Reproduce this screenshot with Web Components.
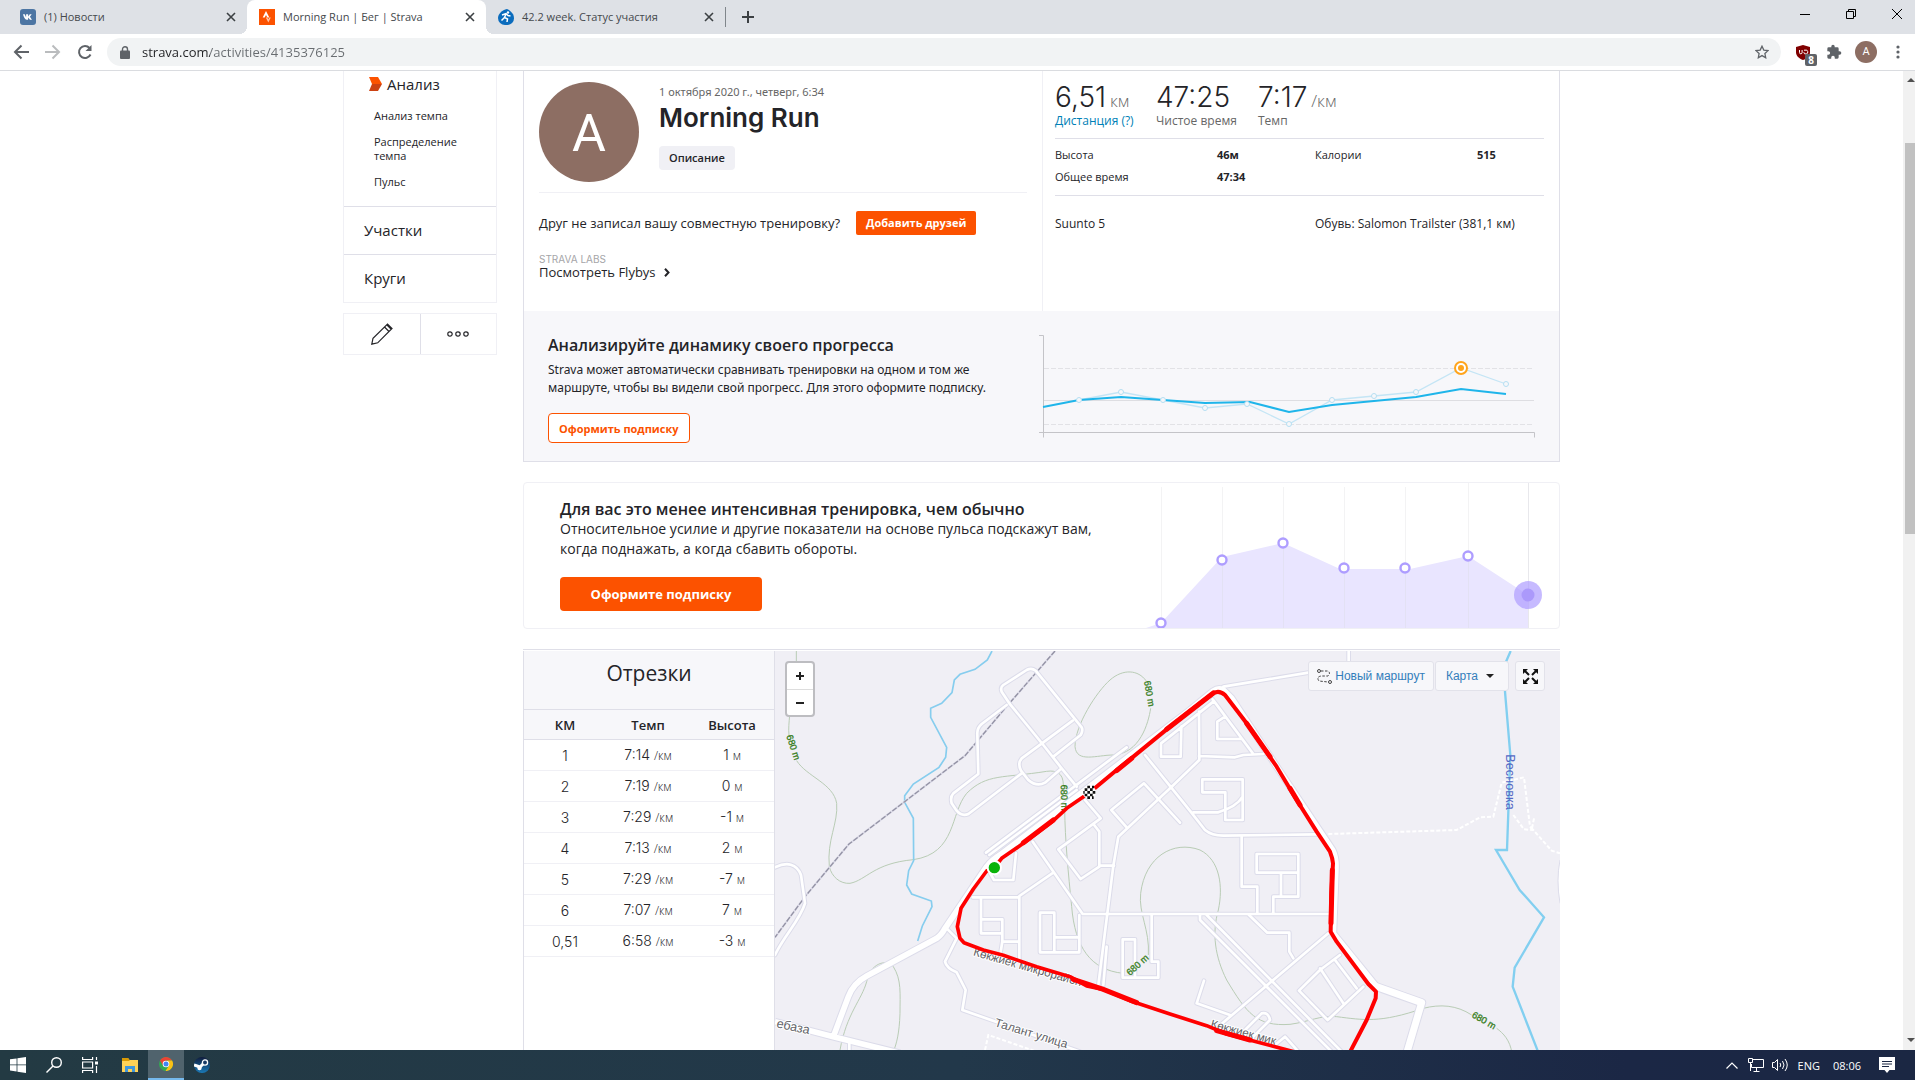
<!DOCTYPE html>
<html lang="ru">
<head>
<meta charset="utf-8">
<title>Morning Run | Бег | Strava</title>
<style>
html,body{margin:0;height:100%}
body{display:flex;flex-direction:column;overflow:hidden;background:#fff;color:#242428;font-family:"Open Sans","Noto Sans",sans-serif;font-size:12px}
browser-bar,task-bar{flex:none}
page-view{flex:1;min-height:0}
</style>
</head>
<body>
<browser-bar>
  <browser-tab close-label="Закрыть"><svg slot="icon" width="16" height="16" viewBox="0 0 16 16"><rect width="16" height="16" rx="3" fill="#4c75a3"/><path d="M3 5.200h1.700l1.400 3V5.200h2v2.200l1.700-2.200h1.900L9.900 7.700l2.100 3h-2L8.100 8.500v2.200H6.700C5 10.400 3.700 8 3 5.200z" fill="#fff"/></svg>(1) Новости</browser-tab>
  <browser-tab active close-label="Закрыть"><svg slot="icon" width="16" height="16" viewBox="0 0 16 16"><rect width="16" height="16" fill="#fc5200"/><path d="M7 2l3.300 6.500H8.300L7 6 5.700 8.500H3.700z" fill="#fff"/><path d="M8.300 8.500L9.300 10.500 10.300 8.500h1.500L9.300 13.500 6.800 8.500z" fill="#ffc5a8"/></svg>Morning Run | Бег | Strava</browser-tab>
  <browser-tab close-label="Закрыть"><svg slot="icon" width="16" height="16" viewBox="0 0 16 16"><path d="M9 0c4 2 7 5 7 9.500A6.500 6.500 0 0 1 9.500 16H7A7 7 0 0 1 0 9C0 5 4 1 9 0z" fill="#0b6cbd"/><path d="M4 6l4-1.500 2 2 2.500.5M8 5L6.500 8.500 9.500 10 9 13M6.500 8.500L3.500 11.500" fill="none" stroke="#fff" stroke-width="1.500"/><circle cx="10" cy="3.500" r="1.200" fill="#fff"/></svg>42.2 week. Статус участия</browser-tab>
</browser-bar>
<page-view>
  <activity-sidebar></activity-sidebar>
  <main-column>
    <activity-summary></activity-summary>
    <effort-promo></effort-promo>
    <splits-map>
      <splits-table slot="table"></splits-table>
      <route-map slot="map"></route-map>
    </splits-map>
  </main-column>
</page-view>
<task-bar></task-bar>

<script>
const base = `<style>
*,:host{box-sizing:border-box}
button{font:inherit;color:inherit;background:none;border:0;padding:0;margin:0;cursor:pointer}
a{color:inherit;text-decoration:none}
h1,h2,p,ul,dl,dd,dt{margin:0;padding:0;font-weight:inherit}
ul{list-style:none}
svg{display:block;flex:none}
</style>`;
function define(name, html) {
  const t = document.createElement('template');
  t.innerHTML = base + html;
  customElements.define(name, class extends HTMLElement {
    constructor() {
      super();
      this.attachShadow({mode: 'open'}).append(t.content.cloneNode(true));
    }
    connectedCallback() {
      this.shadowRoot.querySelectorAll('[data-label]').forEach(n =>
        n.setAttribute('aria-label', this.getAttribute(n.dataset.label) || ''));
    }
  });
}

define('browser-tab', `<style>
:host{display:flex;align-items:center;width:239px;height:34px;padding:0 8px 0 12px;color:#45494d;position:relative}
:host([active]){background:#fff;border-radius:8px 8px 0 0}
:host([active])::before,:host([active])::after{content:"";position:absolute;bottom:0;width:8px;height:8px}
:host([active])::before{left:-8px;background:radial-gradient(circle at 0 0,transparent 8px,#fff 8px)}
:host([active])::after{right:-8px;background:radial-gradient(circle at 100% 0,transparent 8px,#fff 8px)}
.t{flex:1;margin-left:8px;white-space:nowrap;font-size:11px;line-height:16px}
button{width:16px;height:16px;display:grid;place-items:center}
</style><slot name="icon"></slot><span class="t"><slot></slot></span>
<button data-label="close-label"><svg width="10" height="10" viewBox="0 0 10 10"><path d="M1 1l8 8M9 1l-8 8" stroke="#3c4043" stroke-width="1.600"/></svg></button>`);

define('browser-bar', `<style>
:host{display:block;border-bottom:1px solid #dadce0}
.strip{display:flex;height:34px;background:#dee1e6;padding-left:8px}
.sep{width:1px;height:20px;margin:7px 0 0;background:#80868b}
.new{width:28px;height:28px;display:grid;place-items:center;margin:3px 0 0 8px}
.win{margin-left:auto;display:flex;height:28px}
.win button{width:46px;display:grid;place-items:center}
.win button:last-child{width:41px;padding-left:5px}
.bar{display:flex;align-items:center;height:36px;padding:0 15px 0 13px}
.nav{display:flex;gap:16px;margin-right:14px}
.box{flex:1;display:flex;align-items:center;height:28px;border-radius:14px;background:#f1f3f4;padding:0 12px 0 13px;gap:12px}
input{flex:1;min-width:0;border:0;outline:0;padding:0;font:13px "Open Sans",sans-serif;line-height:20px;color:transparent;background:linear-gradient(90deg,#202124 68px,#686c70 68px);-webkit-background-clip:text;background-clip:text}
.ext{display:flex;align-items:center;margin-left:14px}
.ub{position:relative;width:22px;height:22px}
.ub svg{margin:4px 0 0 1px}
.ub span{position:absolute;left:10px;top:13px;width:12px;height:12px;border-radius:2px;background:#5f6368;color:#fff;font:bold 10px/12px "Open Sans",sans-serif;text-align:center}
.pz{margin-left:9px}
.av{width:22px;height:22px;border-radius:50%;background:#8d6e63;color:#fff;font:11px/22px Roboto,sans-serif;margin-left:13px;text-align:center}
.dots{margin-left:19px}
</style>
<div class="strip"><slot></slot><span class="sep"></span>
<button class="new" aria-label="Новая вкладка"><svg width="12" height="12" viewBox="0 0 12 12"><path d="M6 0v12M0 6h12" stroke="#3c4043" stroke-width="2"/></svg></button>
<div class="win">
<button aria-label="Свернуть"><svg width="10" height="10"><path d="M0 5.500h10" stroke="#000"/></svg></button>
<button aria-label="Окно"><svg width="10" height="10" fill="none" stroke="#000"><path d="M.5 2.500h7v7h-7zM2.500 2.500v-2h7v7h-2"/></svg></button>
<button aria-label="Закрыть окно"><svg width="10" height="10"><path d="M0 0l10 10M10 0L0 10" stroke="#000"/></svg></button>
</div></div>
<div class="bar"><div class="nav">
<button aria-label="Назад"><svg width="16" height="16" viewBox="0 0 16 16" fill="none" stroke="#5f6368" stroke-width="2"><path d="M16 8H2M8.500 1.500L2 8l6.500 6.500"/></svg></button>
<button aria-label="Вперёд"><svg width="16" height="16" viewBox="0 0 16 16" fill="none" stroke="#babcbe" stroke-width="2"><path d="M0 8h14M7.500 1.500L14 8l-6.500 6.500"/></svg></button>
<button aria-label="Обновить"><svg width="16" height="16" viewBox="0 0 16 16" fill="none" stroke="#5f6368" stroke-width="2"><path d="M13.500 10.500A6 6 0 1 1 12.500 4"/><path d="M14.500 1v6h-6z" fill="#5f6368" stroke="none"/></svg></button></div>
<div class="box"><svg width="10" height="13" viewBox="0 0 10 13"><path d="M2.500 5V3.200a2.500 2.500 0 0 1 5 0V5" fill="none" stroke="#5f6368" stroke-width="1.400"/><rect y="4.500" width="10" height="8.500" rx="1" fill="#5f6368"/></svg>
<input aria-label="Адрес" value="strava.com/activities/4135376125">
<button aria-label="В закладки"><svg width="14" height="14" viewBox="0 0 14 14"><path d="M7 1.200l1.800 3.900 4.200.5-3.100 2.900.8 4.200L7 10.600l-3.700 2.100.8-4.200L1 5.600l4.200-.5z" fill="none" stroke="#5f6368" stroke-width="1.300"/></svg></button></div>
<div class="ext"><div class="ub"><svg width="14" height="15" viewBox="0 0 14 15"><path d="M7 0l7 2v5c0 4-3 6.500-7 8-4-1.500-7-4-7-8V2z" fill="#800000"/><path d="M3.500 5v2.500a1.300 1.300 0 0 0 2.600 0V5M8 5.200h1a2 2 0 1 1-1.200 2" fill="none" stroke="#fff"/></svg><span>8</span></div>
<svg class="pz" width="16" height="16" viewBox="0 0 24 24"><path d="M20.500 11H19V7a2 2 0 0 0-2-2h-4V3.500a2.500 2.500 0 0 0-5 0V5H4a2 2 0 0 0-2 2v3.800h1.500a2.700 2.700 0 0 1 0 5.400H2V20a2 2 0 0 0 2 2h3.800v-1.500a2.700 2.700 0 0 1 5.400 0V22H17a2 2 0 0 0 2-2v-4h1.500a2.500 2.500 0 0 0 0-5z" fill="#5f6368"/></svg>
<button class="av" aria-label="Профиль">A</button>
<svg class="dots" width="4" height="14" viewBox="0 0 4 14" fill="#5f6368"><circle cx="2" cy="2" r="1.600"/><circle cx="2" cy="7" r="1.600"/><circle cx="2" cy="12" r="1.600"/></svg></div></div>`);

define('page-view', `<style>
:host{display:flex;overflow:hidden}
.scroll{flex:1;min-width:0;overflow:hidden;display:flex;justify-content:center;align-items:flex-start}
.in{display:flex;gap:26px;width:1217px;max-width:100%}
.bar{width:12px;background:#f1f1f1;display:flex;flex-direction:column;align-items:flex-end;flex:none}
.bar svg{margin:7px 0 8px}
.thumb{width:10px;height:391px;background:#c1c1c1;margin:53px 0 auto}
</style><div class="scroll"><div class="in"><slot></slot></div></div>
<div class="bar"><svg width="8" height="4"><path d="M0 4h8L4 0z" fill="#505050"/></svg><div class="thumb"></div><svg width="8" height="4"><path d="M0 0h8L4 4z" fill="#505050"/></svg></div>`);

define('activity-sidebar', `<style>
:host{display:block;width:154px;flex:none}
nav{border:1px solid #f0f0f5;border-top:0;font-size:15px;line-height:22px}
nav>a{display:block;padding:12px 20px 13px;border-top:1px solid #dfdfe8}
.an{padding:2px 0 10px}
.an>a{display:flex;gap:5px;padding-left:25px;align-items:center}
ul{padding:9px 30px 0;font-size:11px;line-height:14px}
li{padding:5px 0 7px}
.tools{display:flex;margin-top:10px;border:1px solid #f0f0f5;height:42px}
.tools button{flex:1;display:grid;place-items:center}
.tools button+button{border-left:1px solid #dfdfe8}
</style>
<nav><div class="an"><a href="#"><svg width="13" height="14" viewBox="0 0 13 14"><path d="M0 0h9l4 7H3z" fill="#fc5200"/><path d="M3 7h10l-4 7H0z" fill="#cc4213"/></svg>Анализ</a>
<ul><li><a href="#">Анализ темпа</a></li><li><a href="#">Распределение темпа</a></li><li><a href="#">Пульс</a></li></ul></div>
<a href="#">Участки</a><a href="#">Круги</a></nav>
<div class="tools"><button aria-label="Изменить"><svg width="22" height="22" viewBox="0 0 22 22" fill="none" stroke="#242428" stroke-width="1.200"><path d="M.8 21.200l1.200-6L16.500 1l4.500 4.500L6.700 19.800zM13.500 4l4.500 4.500M16 2l4.500 4.500"/></svg></button>
<button aria-label="Ещё"><svg width="22" height="6" viewBox="0 0 22 6" fill="none" stroke="#242428" stroke-width="1.200"><circle cx="3" cy="3" r="2.200"/><circle cx="11" cy="3" r="2.200"/><circle cx="19" cy="3" r="2.200"/></svg></button></div>`);

define('main-column', `<style>
:host{flex:1;min-width:0;display:flex;flex-direction:column;gap:20px}
</style><slot></slot>`);

define('activity-summary', `<style>
:host{display:block;border:1px solid #dfdfe8;border-top:0}
.top{display:flex;height:240px}
.l{width:519px;flex:none;padding:11px 15px 0;border-right:1px solid #f0f0f5}
.hd{display:flex;gap:20px;padding-bottom:10px;border-bottom:1px solid #f0f0f5}
.av{width:100px;height:100px;border-radius:50%;background:#8d6e63;color:#fff;font:52px/104px Roboto,sans-serif;text-align:center}
time{display:block;color:#666;font:11px/20px "Noto Sans",sans-serif}
h1{font:600 26px/32px Inter,sans-serif}
.desc{margin-top:12px;height:24px;border-radius:4px;background:#f0f0f5;padding:0 10px;font-weight:600;font-size:11px;line-height:24px}
.fr{display:flex;align-items:center;gap:16px;margin-top:18px;font-size:13px;line-height:24px}
.fr button{background:#fc5200;color:#fff;font-weight:700;font-size:11px;height:24px;padding:0 10px;border-radius:2px}
.lab{margin-top:19px;font:10px/10px Inter,sans-serif;color:#a5a5a8}
.fly{display:flex;align-items:center;gap:8px;font-size:13px;line-height:16px}
.r{flex:1;min-width:0;padding:11px 15px 0 12px;font-size:11px}
.st{display:flex;border-bottom:1px solid #dfdfe8;padding-bottom:8px}
.st li:nth-child(1){width:101px}.st li:nth-child(2){width:102px}
.st b{display:block;font:300 28px/30px Inter,sans-serif;white-space:nowrap}
.st small{font:300 17px/20px "Open Sans",sans-serif;color:#666;margin-left:4px}
.st span{display:block;font-size:12px;line-height:18px;color:#666}
.st a{color:#007fb6}
.g{display:grid;grid-template-columns:162px 98px 162px 1fr;row-gap:0;line-height:22px;padding:5px 0 7px;border-bottom:1px solid #dfdfe8}
.g dd{font-weight:700}
.gear{display:grid;grid-template-columns:260px 1fr;font-size:12px;line-height:20px;padding-top:18px}
.pro{display:flex;background:#f7f7fa;height:150px;padding:20px 24px 0 24px}
.pro .t{width:491px;flex:none}
h2{font-weight:600;font-size:16px;line-height:28px}
.pro p{font:12px/18px "Noto Sans",sans-serif;margin-top:2px}
.sub{margin-top:16px;height:30px;border:1px solid #fc5200;border-radius:4px;background:#fff;color:#fc5200;font-weight:700;font-size:11px;padding:0 10px}
</style>
<div class="top"><div class="l"><div class="hd"><div class="av">A</div><div><time>1 октября 2020 г., четверг, 6:34</time><h1>Morning Run</h1><button class="desc">Описание</button></div></div>
<div class="fr"><span>Друг не записал вашу совместную тренировку?</span><button>Добавить друзей</button></div>
<div class="lab">STRAVA LABS</div><a class="fly" href="#">Посмотреть Flybys<svg width="6" height="9" viewBox="0 0 6 9"><path d="M1 .7l3.500 3.800L1 8.300" fill="none" stroke="#242428" stroke-width="2"/></svg></a></div>
<div class="r"><ul class="st"><li><b>6,51<small>км</small></b><span><a href="#">Дистанция (?)</a></span></li><li><b>47:25</b><span>Чистое время</span></li><li><b>7:17<small>/км</small></b><span>Темп</span></li></ul>
<dl class="g"><dt>Высота</dt><dd>46м</dd><dt>Калории</dt><dd>515</dd><dt>Общее время</dt><dd>47:34</dd></dl>
<div class="gear"><span>Suunto 5</span><span>Обувь: Salomon Trailster (381,1 км)</span></div></div></div>
<div class="pro"><div class="t"><h2>Анализируйте динамику своего прогресса</h2><p>Strava может автоматически сравнивать тренировки на одном и том же<br>маршруте, чтобы вы видели свой прогресс. Для этого оформите подписку.</p><button class="sub">Оформить подписку</button></div>
<svg width="496" height="110" viewBox="1039 331 496 110" fill="none"><path d="M1039 335.500h4.500v102M1039 432.500h495.500v5" stroke="#c4c4c8"/><path d="M1044 368.500h490M1044 424.500h490" stroke="#e2e2e6" stroke-dasharray="5 2"/><path d="M1044 400.500h490" stroke="#dedee2"/>
<path d="M1079 400L1121 392 1163 400 1205 408 1247 404 1289 424 1332 400 1374 396 1416 392 1461 368 1506 384" stroke="#c4e5f5" stroke-width="1.300"/>
<path d="M1043 407L1079 400 1121 397 1163 400 1205 403 1250 402 1289 412 1332 405 1374 401 1416 397 1461 389 1506 394" stroke="#1fb5ea" stroke-width="2"/>
<g fill="#f7f7fa" stroke="#b5dff2"><circle cx="1079" cy="400" r="2.500"/><circle cx="1121" cy="392" r="2.500"/><circle cx="1163" cy="400" r="2.500"/><circle cx="1205" cy="408" r="2.500"/><circle cx="1247" cy="404" r="2.500"/><circle cx="1289" cy="424" r="2.500"/><circle cx="1332" cy="400" r="2.500"/><circle cx="1374" cy="396" r="2.500"/><circle cx="1416" cy="392" r="2.500"/><circle cx="1506" cy="384" r="2.500"/></g>
<circle cx="1461" cy="368" r="6" fill="#fff" stroke="#ffa41c" stroke-width="2"/><circle cx="1461" cy="368" r="3" fill="#ffa41c"/></svg></div>`);

define('effort-promo', `<style>
:host{display:flex;justify-content:space-between;height:147px;border:1px solid #f0f0f5;border-radius:4px;overflow:hidden;padding-left:36px}
.t{padding-top:16px}
h2{font-weight:600;font-size:16px;line-height:20px}
p{font-size:14px;line-height:20px;white-space:nowrap}
button{margin-top:18px;width:202px;height:34px;border-radius:4px;background:#fc5200;color:#fff;font-weight:700;font-size:13px}
</style><div class="t"><h2>Для вас это менее интенсивная тренировка, чем обычно</h2><p>Относительное усилие и другие показатели на основе пульса подскажут вам,<br>когда поднажать, а когда сбавить обороты.</p><button>Оформите подписку</button></div>
<svg width="413" height="145" viewBox="1146 483 413 145"><path d="M1146 628L1161 623 1222 557 1283 543 1340 569H1410L1468 556 1528 595V628z" fill="#e9e5ff"/>
<path d="M1161.500 487v141M1222.500 487v141M1283.500 487v141M1344.500 487v141M1405.500 487v141M1468.500 483v145" stroke="#d8d8dc" stroke-opacity=".3"/><path d="M1528.500 483v145" stroke="#e8e8ec"/>
<g fill="#fff" stroke="#ae9dff" stroke-width="2.400"><circle cx="1161" cy="623" r="4.500"/><circle cx="1222" cy="560" r="4.500"/><circle cx="1283" cy="543" r="4.500"/><circle cx="1344" cy="568" r="4.500"/><circle cx="1405" cy="568" r="4.500"/><circle cx="1468" cy="556" r="4.500"/></g>
<circle cx="1528" cy="595" r="14" fill="#ae9dff" fill-opacity=".7"/><circle cx="1528" cy="595" r="6.500" fill="#ab99fb"/></svg>`);

define('splits-map', `<style>
:host{display:flex;border-top:1px solid #dfdfe8;padding-top:1px;height:440px}
slot[name=table]::slotted(*){width:252px;flex:none;border-left:1px solid #dfdfe8;border-right:1px solid #dfdfe8}
slot[name=map]::slotted(*){flex:1;min-width:0}
</style><slot name="table"></slot><slot name="map"></slot>`);

{
  const rows = [['1','7:14','1'],['2','7:19','0'],['3','7:29','-1'],['4','7:13','2'],['5','7:29','-7'],['6','7:07','7'],['0,51','6:58','-3']];
  define('splits-table', `<style>
:host{display:block}
h2{height:59px;background:#f7f7fa;border-bottom:1px solid #dfdfe8;text-align:center;font-size:21px;line-height:45px}
table{width:100%;border-collapse:separate;border-spacing:0;table-layout:fixed;text-align:center}
th{background:#f7f7fa;font-weight:600;font-size:13px;height:30px;padding:0;border-bottom:1px solid #dfdfe8}
td{height:31px;padding:0;border-bottom:1px solid #f0f0f5;font:300 14px "Inter",sans-serif}
small{font:300 12px "Open Sans",sans-serif}
col:nth-child(1){width:82px}col:nth-child(2){width:84px}
</style><h2>Отрезки</h2><table><colgroup><col><col><col></colgroup><thead><tr><th>КМ</th><th>Темп</th><th>Высота</th></tr></thead><tbody>${rows.map(r => `<tr><td>${r[0]}</td><td>${r[1]} <small>/км</small></td><td>${r[2]} <small>м</small></td></tr>`).join('')}</tbody></table>`);
}

define('route-map', `<style>
:host{display:block;position:relative;background:#f0eff5;overflow:hidden}
.z{position:absolute;left:10px;top:10px;border:2px solid #bdbdc1;border-radius:4px;background:#fff;display:flex;flex-direction:column}
.z button{width:26px;height:26px;display:grid;place-items:center}
.z button+button{border-top:1px solid #ddd}
.m{position:absolute;right:15px;top:10px;display:flex;gap:1px}
.m button{height:30px;display:flex;align-items:center;justify-content:center;background:#f7f7fa;border:1px solid #e2e2ea;border-radius:3px;color:#337ebb;font-size:12px;padding:0 8px;font-family:"Liberation Sans",sans-serif}
.n{gap:3px}
.m .k{padding:0 14px 0 10px;gap:8px}.m .f{margin-left:5px;width:30px;padding:0}
text{font-family:"Liberation Sans",sans-serif}
</style>
<svg width="785" height="440" viewBox="15 33 2355 1320">
<g fill="none" stroke="#b9ccb5" stroke-width="3">
<path d="M79 33V65M59 225C57 250 55 265 57 285M80 362C110 410 190 430 200 490C205 550 170 600 178 680C185 710 210 732 240 730C290 720 310 670 430 659C560 640 540 520 590 460C650 400 700 415 830 394C860 390 880 400 880 435M884 505C885 600 895 700 905 800C915 920 960 990 1060 1000M1135 945C1140 870 1105 820 1112 760C1125 650 1210 600 1290 630C1350 660 1360 740 1345 810C1325 880 1335 950 1370 1020C1430 1120 1460 1160 1560 1153C1620 1145 1650 1125 1700 1130C1780 1140 1830 1150 1960 1105C2010 1092 2060 1095 2105 1125M2180 1165C2200 1180 2220 1200 2226 1240"/>
<path d="M1128 122C1105 90 1060 85 1020 120C980 155 915 255 915 320C920 370 980 345 1030 345C1110 340 1135 250 1142 205M210 1230C230 1120 275 1080 290 1025C300 970 350 955 370 980C395 1020 390 1060 390 1120C388 1180 380 1210 370 1235"/></g>
<g fill="none" stroke="#86cdee" stroke-width="5"><path d="M666 33L652 60 615 88 570 103 553 120 546 158 515 190 482 205V232L530 322 527 352 507 382 430 432 404 467V487L430 535 431 662 416 692 410 735 425 762 484 783 486 800 457 858 443 903"/><path d="M2222 33L2208 65 2205 155 2221 345 2211 630H2178L2249 750 2322 832 2234 983 2228 1040 2310 1250" stroke-width="7" stroke="#82cff0"/></g>
<path d="M855 33L718 190 585 347 404 485 237 612 105 770 15 892" fill="none" stroke="#dcdbe8" stroke-width="6"/>
<path d="M855 33L718 190 585 347 404 485 237 612 105 770 15 892" fill="none" stroke="#9392a4" stroke-width="4" stroke-dasharray="16 5"/>
<defs>
<g id="s" fill="none" stroke-linejoin="round" stroke-linecap="round">
<path d="M15 682C50 665 80 670 93 705L105 790C90 840 40 890 15 945"/>
<path d="M718 190L695 155Q690 142 700 135L770 90Q785 82 797 92L935 262Q940 272 932 285L850 350M718 190L820 315 875 385 920 440M908 242L755 355Q742 370 753 392L775 420Q800 442 825 428L875 385M710 195L635 252Q620 265 622 285L625 402 550 460Q540 470 545 490L560 512Q575 530 595 522L755 400"/>
<path d="M648 638L1070 322M658 645L920 450M945 480L992 535 865 628 932 717 988 680V575L970 552M988 677H1032"/>
<path d="M788 605L938 822H1680M850 698L748 768V960M608 772H748M633 775V880H697V838H633M697 880V905H748M697 905L692 935M655 690L672 720H730L738 640"/>
<path d="M853 818H810V937H928V825M853 818V937M853 892H928M1145 825V965H1165V1013H1058V898H1095V1010"/>
<path d="M1125 345L1262 515 1305 570Q1325 587 1360 587L1640 583M1070 562L1024 510 1122 430 1230 548M1205 440L1288 360 1287 215M1287 348L1395 352 1420 345 1480 342M1328 178L1450 342M1365 230L1342 245V297H1412M1173 310V350H1232L1234 260M1173 310L1330 185"/>
<path d="M1205 440L1045 590 1030 677 985 1035M1010 920L1000 1035"/>
<path d="M1297 418H1418V540H1366V457H1297zM1418 470Q1400 500 1345 517H1270"/>
<path d="M1415 590V740H1462V820M1460 642H1585V770H1510V820M1460 642V698H1585M1533 700V770M1437 825L1492 878H1558V935L1570 955"/>
<path d="M1290 825V840L1690 1240M1310 825L1720 1240M1675 880L1380 1130 1345 1160M1302 1022L1280 1090 1380 1125M1410 1185L1475 1120Q1495 1115 1500 1140L1445 1195M1515 1215L1545 1190 1590 1240"/>
<path d="M1710 945L1650 990 1587 1052 1673 1140 1780 1040M1650 985L1720 1090M1695 960L1760 1045"/>
<path d="M530 865L560 895 525 965Q530 985 560 997L587 1050 577 1110 720 1160 930 1235M238 1200V1240M1736 33V65M1360 140L1615 98"/>
</g>
<g id="b" fill="none" stroke-linejoin="round"><path d="M190 1190L235 1070Q250 1030 290 1008L500 895Q515 885 525 865L650 680Q665 660 690 645L1260 210 1330 153Q1345 142 1360 150L1385 175 1530 395 1688 630Q1698 650 1698 680L1690 880 1820 1040 1955 1088M15 1145L190 1190 390 1240"/></g>
</defs>
<use href="#s" stroke="#dcdcea" stroke-width="14"/><use href="#b" stroke="#dcdcea" stroke-width="23"/>
<use href="#s" stroke="#fff" stroke-width="8"/><use href="#b" stroke="#fff" stroke-width="17"/>
<path d="M1820 1040L1955 1088 1910 1240" fill="none" stroke="#dcdcea" stroke-width="27" stroke-linejoin="round"/><path d="M1815 1038L1955 1088 1910 1240" fill="none" stroke="#fff" stroke-width="21" stroke-linejoin="round"/>
<path d="M2370 660Q2358 720 2370 790" fill="#fff" stroke="#dcdcea" stroke-width="3"/>
<g fill="none" stroke="#fff" stroke-width="6" stroke-dasharray="12 6"><path d="M1675 582L2060 570 2130 532 2170 530 2195 428 2262 412 2280 560 2290 570M2230 525L2262 568 2290 570 2345 632 2370 640M2292 535L2285 570"/><path d="M645 1230L655 1185 800 1235"/></g>
<g fill="#626267" stroke="#fff" stroke-width="6" paint-order="stroke" stroke-linejoin="round">
<text font-size="36" transform="translate(672 1158) rotate(17)">Талант улица</text>
<text font-size="38" transform="translate(18 1162) rotate(12)">ебаза</text>
<text font-size="35" transform="translate(608 946) rotate(16)">Көкжиек микрорайон</text>
<text font-size="35" transform="translate(1320 1162) rotate(15)">Көкжиек мик</text></g>
<text font-size="38" fill="#5468c4" transform="translate(2208 343) rotate(90)">Весновка</text>
<g font-size="28" fill="#397f1f" stroke="#397f1f"><text transform="translate(49 288) rotate(72)">680 m</text><text transform="translate(1122 124) rotate(80)">680 m</text><text transform="translate(872 434) rotate(88)">680 m</text><text transform="translate(1080 1008) rotate(-42)">680 m</text><text transform="translate(2104 1130) rotate(30)">680 m</text></g>
<path d="M958 458L1040 390 1080 358 1190 268 1260 213 1325 163Q1345 147 1365 165L1430 250 1520 380 1580 480 1640 575 1680 635Q1688 655 1689 670L1684 760 1682 875 1700 905 1795 1032 1818 1055 1817 1075 1790 1140 1738 1240" fill="none" stroke="#f00" stroke-width="12" stroke-linejoin="round"/>
<path d="M958 458L890 505 850 542 760 610 695 655 673 683 650 693 610 747 573 805 562 860 570 895 582 908 640 930 700 946 800 980 900 1010 950 1038 1000 1048 1080 1082 1200 1122 1310 1157 1370 1182 1590 1240" fill="none" stroke="#f00" stroke-width="11" stroke-linejoin="round"/>
<path d="M1190 268L1330 159M1430 250L1500 350M1560 445L1590 495M1687 690L1683 850M1040 392L1085 355M910 1018L1000 1048 1100 1088M1340 1172L1440 1200M760 608L850 540" fill="none" stroke="#f00" stroke-width="15" stroke-linecap="round"/>
<circle cx="673" cy="683" r="20" fill="#0ab30a" stroke="#fff" stroke-width="6"/>
<circle cx="958" cy="457" r="20" fill="#fff"/><path d="M952 441h8M966 441h6M944 449h8M960 449h8M944 457h-4M952 457h8M968 457h8M944 465h8M960 465h8M952 473h8M966 473h5" stroke="#111" stroke-width="8"/>
</svg>
<div class="z"><button aria-label="Приблизить"><svg width="8" height="8"><path d="M4 0v8M0 4h8" stroke="#222" stroke-width="2"/></svg></button><button aria-label="Отдалить"><svg width="8" height="8"><path d="M0 4h8" stroke="#222" stroke-width="2"/></svg></button></div>
<div class="m"><button class="n"><svg width="15" height="15" viewBox="0 0 15 15" fill="none" stroke="#444"><circle cx="2" cy="2" r="1.500"/><circle cx="13" cy="13" r="1.500"/><path d="M4 2h7q3 2 0 5H4q-5 1-2 5l9 1" stroke-dasharray="2.500 1.500"/></svg>Новый маршрут</button>
<button class="k">Карта<svg width="8" height="4"><path d="M0 0h8L4 4z" fill="#222"/></svg></button>
<button class="f" aria-label="Во весь экран"><svg width="15" height="15" viewBox="0 0 15 15" fill="#111" stroke="#111"><path d="M0 0h5L0 5zM15 0v5l-5-5zM0 15v-5l5 5zM15 15h-5l5-5z" stroke="none"/><path d="M1 1l5 5M14 1L9 6M1 14l5-5M14 14L9 9" stroke-width="2"/></svg></button></div>`);

define('task-bar', `<style>
:host{display:flex;align-items:center;height:30px;background:linear-gradient(90deg,#233a43,#22384a 50%,#1b2745 85%,#1b2743);color:#fff;font-size:11px}
button{height:30px;width:36px;display:grid;place-items:center}
.on{background:#50636d;border-bottom:2px solid #76b9ed}
.l{display:flex}
.c{margin-left:4px}
.r{margin-left:auto;display:flex;align-items:center;padding-right:20px}
.r svg+svg{margin-left:10px}
.r .v{margin-left:8px}.e{margin-left:9px}.t{margin-left:13px}.r .n{margin-left:18px}
</style><div class="l">
<button aria-label="Пуск"><svg width="16" height="16" viewBox="0 0 16 16" fill="#fff"><path d="M0 2.300l6.600-.9v6.100H0zM7.400 1.300L16 0v7.500H7.400zM0 8.300h6.600v6.100L0 13.600zM7.400 8.300H16V16l-8.600-1.300z"/></svg></button>
<button aria-label="Поиск"><svg width="16" height="16" viewBox="0 0 16 16" fill="none" stroke="#fff" stroke-width="1.400"><circle cx="10.500" cy="5.500" r="4.800"/><path d="M7 9L.5 15.500"/></svg></button>
<button aria-label="Представление задач"><svg width="16" height="16" viewBox="0 0 16 16" fill="none" stroke="#fff" stroke-width="1.200"><path d="M.6 0v2.500h10V0M.6 5h10v6H.6zM.6 16v-2.500h10V16M14.500 0v3M14.500 9v7"/><path d="M13 4.500h3v3h-3z" fill="#fff" stroke="none"/></svg></button>
<button class="c" aria-label="Проводник"><svg width="16" height="14" viewBox="0 0 16 14"><path d="M0 0h6l1.500 2H16v12H0z" fill="#ffd257"/><path d="M0 0h6l1.500 2v1H0z" fill="#d99a05"/><path d="M3 14V8h10v6h-3v-3H6v3z" fill="#4098dd"/></svg></button>
<button class="on" aria-label="Chrome"><svg width="14" height="14" viewBox="0 0 14 14"><circle cx="7" cy="7" r="7" fill="#34a853"/><path d="M1 3.500A7 7 0 0 1 13 3.500H7L4 8.500z" fill="#ea4335"/><path d="M13.060 3.500A7 7 0 0 1 6.500 14L10 8.500 8 3.500z" fill="#fbc116"/><circle cx="7" cy="7" r="3.300" fill="#fff"/><circle cx="7" cy="7" r="2.500" fill="#4285f4"/></svg></button>
<button aria-label="Steam"><svg width="16" height="16" viewBox="0 0 16 16"><defs><linearGradient id="g" x2="0" y2="1"><stop stop-color="#101c3c"/><stop offset="1" stop-color="#1a7ab8"/></linearGradient></defs><circle cx="8" cy="8" r="8" fill="url(#g)"/><path d="M0 8l6 2 3-3" stroke="#fff" stroke-width="3" fill="none"/><circle cx="11" cy="5.500" r="2.600" fill="#183a66" stroke="#fff" stroke-width="1.300"/><circle cx="5.500" cy="11" r="2.200" fill="#fff"/></svg></button></div>
<div class="r"><svg width="12" height="7" viewBox="0 0 12 7"><path d="M.5 6.500L6 1l5.500 5.500" fill="none" stroke="#fff" stroke-width="1.200"/></svg>
<svg width="16" height="14" viewBox="0 0 16 14" fill="none" stroke="#fff"><path d="M5 1.500h10.500v8H3.500V6M.5.5h4v4h-4zM2.500 5v8M8.500 10v3M5.500 13.500h6"/></svg>
<svg class="v" width="17" height="14" viewBox="0 0 17 14" fill="none" stroke="#fff"><path d="M.5 4.500h2l3-3v11l-3-3h-2zM8 5q1.500 2 0 4M10.500 3q3 4 0 8M13 1q4.500 6 0 12"/></svg>
<span class="e">ENG</span><time class="t">08:06</time>
<svg class="n" width="16" height="16" viewBox="0 0 16 16"><path d="M0 0h16v13h-5.500L8 16l-2.500-3H0z" fill="#fff"/><path d="M3 4.500h10M3 7h10M3 9.500h7" stroke="#1b2743"/></svg></div>`);
</script>
</body>
</html>
